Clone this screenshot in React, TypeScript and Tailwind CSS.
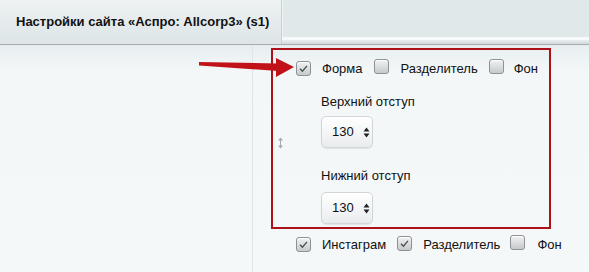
import React from "react";

const font = { fontFamily: '"Liberation Sans", Arial, sans-serif' };

function Check({ checked }: { checked?: boolean }) {
  return (
    <span className="inline-flex h-[15px] w-[15px] shrink-0 items-center justify-center rounded-[3px] border border-[#8e9295] bg-gradient-to-b from-[#f1f2f2] to-[#c7cacc] shadow-[inset_0_1px_0_#fff]">
      {checked && (
        <svg width="11" height="11" viewBox="0 0 11 11">
          <path d="M2 5.8 L4.4 8.2 L9 2.8" fill="none" stroke="#4a4d50" strokeWidth="1.3" />
        </svg>
      )}
    </span>
  );
}

function Sel() {
  return (
    <div className="flex h-[32px] w-[52px] items-center rounded-[5px] border border-[#d3d6d8] bg-gradient-to-b from-[#ffffff] to-[#e9ecee] pl-[10px] text-[13px] leading-[16px] text-[#111] shadow-[0_1px_1px_rgba(0,0,0,0.08)]">
      <span>130</span>
      <svg className="ml-[9px]" width="7" height="11" viewBox="0 0 7 11">
        <path d="M3.5 0.5 L6.5 4.5 L0.5 4.5 Z" fill="#222" />
        <path d="M3.5 10.5 L6.5 6.5 L0.5 6.5 Z" fill="#222" />
      </svg>
    </div>
  );
}

export default function App() {
  return (
    <div className="relative h-[272px] w-[589px] overflow-hidden bg-[#f4f8f9]" style={font}>
      {/* header */}
      <div className="flex h-[45px] border-b border-[#a6adb1]">
        <div className="flex h-full w-[282px] items-center border-r border-[#c8d0d3] bg-gradient-to-b from-[#eef2f3] to-[#dde5e7] pl-[16px] text-[13px] font-bold text-[#111]">
          Настройки сайта «Аспро: Allcorp3» (s1)
        </div>
        <div className="flex flex-1 flex-col">
          <div className="h-[37px] border-l border-[#eef3f4] bg-[#e1e8ea]" />
          <div className="h-[3px] bg-[#f7f9fa]" />
          <div className="flex-1 bg-gradient-to-b from-[#e9eef0] to-[#d3dadd]" />
        </div>
      </div>

      {/* content */}
      <div className="flex h-[227px] bg-gradient-to-b from-[#e8eef0] via-[#f3f7f8] to-[#f4f8f9] via-[12%]">
        <div className="w-[253px] shrink-0 border-r border-[#dfe6e9]" />
        <div className="flex flex-col pl-[18px] pt-[3px]">
          <div className="relative flex h-[181px] w-[280px] flex-col border-2 border-[#ad1219] pl-[23px] pt-[11px] text-[13px] leading-[16px] text-[#111]">
            <div className="flex h-[15px] items-center">
              <Check checked />
              <span className="ml-[11px]">Форма</span>
              <span className="ml-[11px]"><Check /></span>
              <span className="ml-[12px]">Разделитель</span>
              <span className="ml-[11px]"><Check /></span>
              <span className="ml-[10px]">Фон</span>
            </div>
            <div className="ml-[25px] mt-[18px]">Верхний отступ</div>
            <div className="ml-[25px] mt-[6px]"><Sel /></div>
            <div className="ml-[25px] mt-[20px]">Нижний отступ</div>
            <div className="ml-[25px] mt-[8px]"><Sel /></div>
            <svg className="absolute left-[4px] top-[87px]" width="7" height="12" viewBox="0 0 7 12">
              <path d="M3.5 1.5 V10.5" stroke="#a3a9ac" strokeWidth="1" />
              <path d="M1 3.5 L3.5 0.5 L6 3.5 Z" fill="#a3a9ac" />
              <path d="M1 8.5 L3.5 11.5 L6 8.5 Z" fill="#a3a9ac" />
            </svg>
          </div>
          <div className="mt-[8px] flex h-[15px] items-center pl-[25px] text-[13px] leading-[16px] text-[#111]">
            <Check checked />
            <span className="ml-[11px]">Инстаграм</span>
            <span className="ml-[11px]"><Check checked /></span>
            <span className="ml-[11px]">Разделитель</span>
            <span className="ml-[10px]"><Check /></span>
            <span className="ml-[12px]">Фон</span>
          </div>
        </div>
      </div>

      {/* arrow */}
      <svg className="absolute left-[195px] top-[52px]" width="104" height="30" viewBox="0 0 104 30">
        <path d="M4 10 L83 11.5 L83 19 L4 13.5 Z" fill="#c1121a" />
        <path d="M81 6 L99 15 L81 25 Z" fill="#c1121a" />
      </svg>
    </div>
  );
}
